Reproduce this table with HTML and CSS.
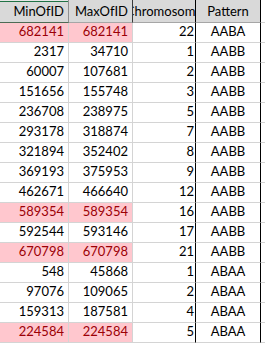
FILE: index.html
```html
<!DOCTYPE html>
<html>
<head>
<meta charset="utf-8">
<link rel="stylesheet" href="styles.css">
</head>
<body>
<div class="sheet">
  <div class="c h a sel">MinOfID</div>
  <div class="c h b">MaxOfID</div>
  <div class="c h ch"><span>Chromosome</span></div>
  <div class="c h pt">Pattern</div>
  <div class="c h e"></div>

  <div class="c num a bad">682141</div><div class="c num b bad">682141</div><div class="c num ch">22</div><div class="c pt">AABA</div><div class="c e"></div>
  <div class="c num a">2317</div><div class="c num b">34710</div><div class="c num ch">1</div><div class="c pt">AABB</div><div class="c e"></div>
  <div class="c num a">60007</div><div class="c num b">107681</div><div class="c num ch">2</div><div class="c pt">AABB</div><div class="c e"></div>
  <div class="c num a">151656</div><div class="c num b">155748</div><div class="c num ch">3</div><div class="c pt">AABB</div><div class="c e"></div>
  <div class="c num a">236708</div><div class="c num b">238975</div><div class="c num ch">5</div><div class="c pt">AABB</div><div class="c e"></div>
  <div class="c num a">293178</div><div class="c num b">318874</div><div class="c num ch">7</div><div class="c pt">AABB</div><div class="c e"></div>
  <div class="c num a">321894</div><div class="c num b">352402</div><div class="c num ch">8</div><div class="c pt">AABB</div><div class="c e"></div>
  <div class="c num a">369193</div><div class="c num b">375953</div><div class="c num ch">9</div><div class="c pt">AABB</div><div class="c e"></div>
  <div class="c num a">462671</div><div class="c num b">466640</div><div class="c num ch">12</div><div class="c pt">AABB</div><div class="c e"></div>
  <div class="c num a bad">589354</div><div class="c num b bad">589354</div><div class="c num ch">16</div><div class="c pt">AABB</div><div class="c e"></div>
  <div class="c num a">592544</div><div class="c num b">593146</div><div class="c num ch">17</div><div class="c pt">AABB</div><div class="c e"></div>
  <div class="c num a bad">670798</div><div class="c num b bad">670798</div><div class="c num ch">21</div><div class="c pt">AABB</div><div class="c e"></div>
  <div class="c num a">548</div><div class="c num b">45868</div><div class="c num ch">1</div><div class="c pt">ABAA</div><div class="c e"></div>
  <div class="c num a">97076</div><div class="c num b">109065</div><div class="c num ch">2</div><div class="c pt">ABAA</div><div class="c e"></div>
  <div class="c num a">159313</div><div class="c num b">187581</div><div class="c num ch">4</div><div class="c pt">ABAA</div><div class="c e"></div>
  <div class="c num a bad">224584</div><div class="c num b bad">224584</div><div class="c num ch">5</div><div class="c pt">ABAA</div><div class="c e"></div>
</div>
</body>
</html>
```

FILE: styles.css
```css
html, body {
  margin: 0;
  padding: 0;
  background: #ffffff;
  overflow: hidden;
}

.sheet {
  display: grid;
  grid-template-columns: 69px 64px 63px 65px 1fr;
  grid-template-rows: 23px;
  grid-auto-rows: 20px;
  width: 265px;
  height: 345px;
  overflow: hidden;
  font-family: Lato, "Liberation Sans", sans-serif;
  font-size: 13px;
  color: #000000;
}

.c {
  box-sizing: border-box;
  display: flex;
  align-items: flex-end;
  padding-bottom: 3px;
  line-height: 15px;
  border-right: 1px solid #d4d4d4;
  border-bottom: 1px solid #d4d4d4;
  white-space: nowrap;
  overflow: hidden;
}

.num {
  justify-content: flex-end;
  padding-right: 4px;
}

.ch.num {
  padding-right: 1px;
}

.pt {
  justify-content: center;
  border-right-color: #000000;
}

.ch {
  border-right-color: #000000;
}

.e {
  border-right: none;
}

.h {
  background: #d9d9d9;
  border-bottom-color: #a6a6a6;
  padding-bottom: 3px;
}

.h.a,
.h.b {
  justify-content: flex-end;
  padding-right: 4px;
  border-right-color: #8f8f8f;
}

.h.b {
  border-right-color: #3a3a3a;
}

.h.ch {
  justify-content: center;
  padding: 0 0 3px 0;
  border-right-color: #000000;
}

.h.pt {
  border-right-color: #000000;
}

.h.e {
  background: #ffffff;
  border-bottom-color: #d4d4d4;
}

.sel {
  background: linear-gradient(#e6e6e6 0 1px, #217346 1px 2px, #d9d9d9 2px);
  border-bottom-color: #4d6b55;
}

.bad {
  background: #ffc7ce;
  color: #9c0006;
}
```
